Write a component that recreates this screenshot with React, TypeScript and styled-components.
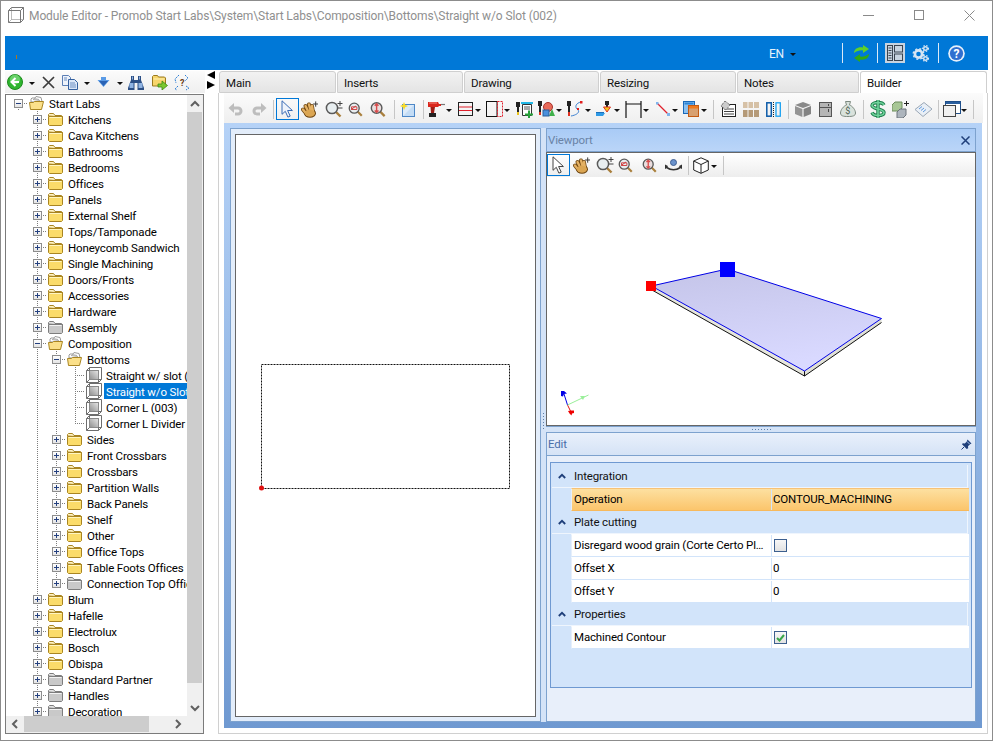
import React from "react";
import styled, { createGlobalStyle } from "styled-components";

const FONT = `Roboto, "Noto Sans", "Liberation Sans", sans-serif`;
const BAR_BLUE = "#0078d7";
const PANEL_LINE = "#7da2ce";
const DOT = "#7d7d7d";

const GlobalStyle = createGlobalStyle`
  html, body { margin: 0; padding: 0; background: #fff; }
  body { font-family: ${FONT}; font-size: 11.5px; letter-spacing: -0.15px; color: #000; }
  svg { display: block; }
`;

/* ---------- icons ---------- */

const Cube = ({ size = 16, color = "#777" }: { size?: number; color?: string }) => (
  <svg width={size} height={size} viewBox="0 0 16 16" fill="none" stroke={color}>
    <path d="M.5 3.5 3.5.5h12v12l-3 3H.5z" />
    <path d="M.5 3.5h12v12M12.5 3.5l3-3" />
    <path d="M3.5.5v12h12M3.5 12.5l-3 3" strokeOpacity=".5" />
  </svg>
);

const FolderIcon = ({ gray }: { gray?: boolean }) => (
  <svg width="15" height="14" viewBox="0 0 15 14">
    <path d="M.5 4V2.500l1-1h4l1.500 2h6.500l1 1V5z" fill={gray ? "#e4e4e4" : "#fff3c4"} stroke={gray ? "#7d7d7d" : "#a98522"} />
    <path d="M.5 4.500h14v8l-1 1h-12l-1-1z" fill={gray ? "#c9c9c9" : "#fbdc6a"} stroke={gray ? "#7d7d7d" : "#a98522"} />
    <path d="M1.500 5.500h12" stroke={gray ? "#f2f2f2" : "#fff5c0"} />
  </svg>
);

const OpenFolderIcon = () => (
  <svg width="15" height="14" viewBox="0 0 15 14">
    <path d="M2 6V3l1-1h3l1-1.500 5 1 1 4z" fill="#fff" stroke="#9a9a9a" />
    <path d="M4 3.500l7 1M5 2.500l5 1" stroke="#a9a9a9" />
    <path d="M.5 6.500h4l1-1h9l-2 8h-11z" fill="#fbe08a" stroke="#a98522" />
  </svg>
);

const LeafIcon = () => (
  <svg width="16" height="16" viewBox="0 0 16 16" fill="none" stroke="#6e6e6e">
    <defs>
      <linearGradient id="leafFill" x1="0" y1="1" x2="1" y2="0">
        <stop offset="0" stopColor="#8e8e8e" />
        <stop offset="1" stopColor="#e8e8e8" />
      </linearGradient>
    </defs>
    <path d="M.5 3.500 3.500.5h12v12l-3 3H.5z" fill="#fff" />
    <rect x="3.500" y="3.500" width="9" height="9" fill="url(#leafFill)" stroke="#8a8a8a" />
    <path d="M.5 3.500h3M3.500.5v3M12.500 12.500h3M12.500 12.500v3M.5 15.500l3-3" />
  </svg>
);

const Back = () => (
  <svg width="16" height="16" viewBox="0 0 16 16">
    <circle cx="8" cy="8" r="7.500" fill="#2fb52f" stroke="#1c8a1c" />
    <circle cx="8" cy="5.500" r="5" fill="#8fe58f" opacity=".6" />
    <path d="M8.500 4 4.500 8l4 4M5 8h7" fill="none" stroke="#fff" strokeWidth="2" />
  </svg>
);

const Cross = () => (
  <svg width="13" height="13" viewBox="0 0 13 13">
    <path d="M1 1l11 11M12 1 1 12" stroke="#3c3c3c" strokeWidth="1.700" />
  </svg>
);

const Copy = () => (
  <svg width="16" height="15" viewBox="0 0 16 15">
    <path d="M.5.5h6l2 2v8h-8z" fill="#eef3fb" stroke="#5c7fb5" />
    <path d="M6.500 4.500h6l3 3v7h-9z" fill="#dbe7f8" stroke="#34609f" />
    <path d="M8 8h5M8 10h6M8 12h6M2 3h3M2 5h3" stroke="#6c8fc2" />
  </svg>
);

const DownArrow = () => (
  <svg width="13" height="11" viewBox="0 0 13 11">
    <path d="M.5 3h3.500V0h5v3h3.500l-6 7z" fill="#5a9be6" />
    <path d="M2 4h9L6.500 9z" fill="#2a63b5" />
  </svg>
);

const Binoculars = () => (
  <svg width="16" height="15" viewBox="0 0 16 15">
    <path d="M3 1h3v4h4V1h3v4l3 8v2H9.500V8h-3v7H0v-2l3-8z" fill="#2c4f85" />
    <path d="M1.500 8h4v5h-4zM10.500 8h4v5h-4z" fill="#8fb3e2" />
    <path d="M4 1.500h1v3H4zM11 1.500h1v3h-1z" fill="#8fb0dc" />
  </svg>
);

const FolderGo = () => (
  <svg width="16" height="16" viewBox="0 0 16 16">
    <path d="M.5 2.500l1-1h4l1 1.500h6l1 1v8h-13z" fill="#f7d56b" stroke="#9a7a1e" />
    <path d="M1.500 5h11" stroke="#fff2b5" />
    <path d="M6 10h4V7l5.500 4.500L10 16v-3H6z" fill="#7cc72f" stroke="#3d8a12" strokeWidth=".8" />
  </svg>
);

const BlueDashed = () => (
  <svg width="16" height="17" viewBox="0 0 16 17" fill="none">
    <path d="M5 1 1 5l1 4M11 1l3 3-3 3M4 12l-3 3 2 1M12 12l3 2-3 2" stroke="#2d7fd6" strokeDasharray="2 1" />
    <text x="6" y="12" fontSize="9" fontWeight="700" fill="#6b3d14" fontFamily={FONT}>?</text>
  </svg>
);

const Undo = ({ flip }: { flip?: boolean }) => (
  <svg width="16" height="14" viewBox="0 0 16 14" style={flip ? { transform: "scaleX(-1)" } : undefined}>
    <path d="M3 6h7a3 3 0 0 1 0 6H7" fill="none" stroke="#bdbdbd" strokeWidth="3" />
    <path d="M6 1v10L.5 6z" fill="#bdbdbd" />
  </svg>
);

const Cursor = ({ color = "#3b6cb5", fill = "#eef3fb" }: { color?: string; fill?: string }) => (
  <svg width="13" height="18" viewBox="0 0 13 18">
    <path d="M1 .8v13.500l3.300-3 2.600 5.800 2.300-1-2.600-5.600h4.800z" fill={fill} stroke={color} />
  </svg>
);

const FINGERS = "M2 8.500 6 13.500M4.500 5 8 12M8 3.500l2 7.500M11 5l1 6";

const Hand = () => (
  <svg width="17" height="17" viewBox="0 0 17 17" fill="none" strokeLinecap="round">
    <path d="M12.500 3h4.500M14.700.8v4.500" stroke="#3a3a3a" />
    <g stroke="#6d4510" strokeWidth="3.900">
      <path d={FINGERS} />
    </g>
    <ellipse cx="9" cy="12.300" rx="6" ry="4.500" fill="#6d4510" />
    <g stroke="#e4b164" strokeWidth="2.400">
      <path d={FINGERS} />
    </g>
    <ellipse cx="9" cy="12.300" rx="5" ry="3.500" fill="#dba653" />
  </svg>
);

type GlassKind = "plus" | "rect" | "fit";

const Glass = ({ kind }: { kind: GlassKind }) => (
  <svg width="18" height="17" viewBox="0 0 18 17" fill="none">
    <path d="M10.500 10.500l5 5" stroke="#a97f3c" strokeWidth="2.400" />
    <circle cx="7" cy="7" r="5.600" fill={kind === "fit" ? "#eadede" : "#e8eef0"} stroke="#5a5a5a" strokeWidth="1.500" />
    {kind === "plus" && <path d="M12.500 2.500h5M15 0v5M12.500 7h5" stroke="#444" />}
    {kind === "rect" && <path d="M3.500 8.500 9 4.500M4 5.500h6v3H4z" stroke="#cc3333" />}
    {kind === "fit" && <path d="M7 2.500v9M5 4.500l2-2 2 2M5 9.500l2 2 2-2" stroke="#d84c4c" strokeWidth="1.500" />}
  </svg>
);

const NewSheet = () => (
  <svg width="15" height="15" viewBox="0 0 15 15">
    <rect x="2.500" y="2.500" width="12" height="12" fill="#dcebfa" stroke="#4d87c7" />
    <path d="M3 14l11-11v11z" fill="#c3dcf5" />
    <path d="M4 0l1.200 2.800L8 4 5.200 5.200 4 8 2.800 5.200 0 4l2.800-1.200z" fill="#f8dc2c" />
  </svg>
);

const Drill = () => (
  <svg width="17" height="17" viewBox="0 0 17 17">
    <path d="M0 1h10l1 2h2v2h-2l-1 1H0z" fill="#d9261c" />
    <path d="M13 3.500h4" stroke="#777" strokeWidth="1.200" />
    <path d="M2.500 6h4.500l-1 6H3z" fill="#9d1d15" />
    <path d="M1 12h7v4H1z" fill="#222" />
    <path d="M1 2h8" stroke="#f58b80" />
  </svg>
);

const RectBand = () => (
  <svg width="15" height="14" viewBox="0 0 15 14" fill="none">
    <rect x=".5" y=".5" width="14" height="13" stroke="#222" />
    <path d="M1 5h13M1 8.500h13" stroke="#e0202c" />
  </svg>
);

const SidePanel = () => (
  <svg width="17" height="16" viewBox="0 0 17 16" fill="none">
    <rect x=".5" y=".5" width="10.500" height="15" stroke="#111" />
    <rect x="11.500" y=".5" width="5" height="15" stroke="#e0202c" strokeDasharray="2 1" />
  </svg>
);

const MachineAdd = () => (
  <svg width="17" height="17" viewBox="0 0 17 17">
    <path d="M0 1h4v5H3v5H1V6H0z" fill="#222" />
    <path d="M1 11h2v3H1z" fill="#e8c21c" />
    <path d="M5 1h12v2H5z" fill="#22b8e6" />
    <path d="M6.500 3.500h9v11h-9z" fill="#fff" stroke="#333" />
    <path d="M8 6h6M8 8h6" stroke="#555" />
    <path d="M12 9.500h2v3h3v2h-3v2.500h-2v-2.500h-3v-2h3z" fill="#26a33a" />
  </svg>
);

const MachineShapes = () => (
  <svg width="17" height="16" viewBox="0 0 17 16">
    <path d="M0 0h4v5H3v6H1V5H0z" fill="#222" />
    <path d="M1 11h2v3H1z" fill="#e03020" />
    <circle cx="10" cy="6" r="4.500" fill="#e86a5a" stroke="#a8322a" />
    <path d="M11 15l3-7 3 7z" fill="#3fb04a" />
    <rect x="5" y="9" width="6" height="6" fill="#4a90dc" stroke="#285f9e" />
  </svg>
);

const MachineCurve = () => (
  <svg width="16" height="17" viewBox="0 0 16 17" fill="none">
    <path d="M0 0h4v5H3v6H1V5H0z" fill="#222" />
    <path d="M1 11h2v4H1z" fill="#e03020" />
    <path d="M14 1C9 2 7 6 11 9c2 2-1 5-7 6" stroke="#3a7fd0" />
    <rect x="13" y="0" width="2.500" height="2.500" fill="#e02020" />
    <rect x="10" y="7" width="2" height="2" fill="#e02020" />
  </svg>
);

const MachineSheet = () => (
  <svg width="17" height="16" viewBox="0 0 17 16">
    <path d="M9 0h4v4h-1v2h-2V4H9z" fill="#222" />
    <path d="M7.500 6h7L11 11z" fill="#f0c81e" stroke="#e03020" />
    <path d="M0 12h9l-2 3H0z" fill="#2e9ae6" />
    <path d="M0 11.500h8" stroke="#1b6fbb" />
  </svg>
);

const Dimension = () => (
  <svg width="17" height="17" viewBox="0 0 17 17">
    <path d="M1 0v17M16 0v17M1 3h15" stroke="#111" strokeWidth="1.200" fill="none" />
  </svg>
);

const Diagonal = () => (
  <svg width="14" height="14" viewBox="0 0 14 14">
    <path d="M1 1l12 12" stroke="#e0202c" strokeWidth="1.300" />
    <path d="M0 0h2.500v2.500H0zM11 11h3v3h-3z" fill="#7fb4ec" />
  </svg>
);

const Stacked = () => (
  <svg width="16" height="16" viewBox="0 0 16 16">
    <rect x=".5" y=".5" width="11" height="12" fill="#8cc0ee" stroke="#1a68b8" />
    <rect x="1.500" y="1.500" width="9" height="2" fill="#2b83d6" />
    <rect x="5.500" y="4.500" width="10" height="11" fill="#d8a070" stroke="#c45a12" />
    <rect x="6" y="5" width="9" height="2.500" fill="#f07a1c" />
  </svg>
);

const Blueprint = () => (
  <svg width="17" height="16" viewBox="0 0 17 16">
    <rect x="3.500" y="3.500" width="13" height="12" fill="#fff" stroke="#222" />
    <path d="M5 8h10M5 10.500h10M5 13h10" stroke="#444" />
    <path d="M6 0l5 4-4 5-5-4z" fill="#ccc" stroke="#777" strokeDasharray="2 1" />
  </svg>
);

const Tiles = () => (
  <svg width="16" height="15" viewBox="0 0 16 15">
    <path d="M0 0h4.500v6H0zM5.500 0H10v6H5.500zM11 0h5v6h-5z" fill="#d6c1a6" />
    <path d="M0 8h4.500v7H0zM5.500 8H10v7H5.500zM11 8h5v7h-5z" fill="#b59a78" />
  </svg>
);

const Columns = () => (
  <svg width="15" height="15" viewBox="0 0 15 15" fill="none">
    <rect x=".8" y=".8" width="4.500" height="13.400" stroke="#0b5aa8" strokeWidth="1.500" />
    <rect x="10" y=".8" width="4.300" height="13.400" stroke="#19a0f0" strokeWidth="1.300" />
    <path d="M7.500 0v15" stroke="#222" strokeDasharray="1 1" />
  </svg>
);

const GrayBox = () => (
  <svg width="16" height="15" viewBox="0 0 16 15">
    <path d="M0 3l8-3 8 3-8 3z" fill="#8a8a8a" />
    <path d="M0 4v8l7.400 3V7z" fill="#949494" />
    <path d="M16 4v8l-7.400 3V7z" fill="#838383" />
  </svg>
);

const Fridge = () => (
  <svg width="13" height="15" viewBox="0 0 13 15">
    <rect x=".5" y=".5" width="12" height="14" fill="#b5b5b5" stroke="#555" />
    <path d="M1 5.500h11" stroke="#555" />
    <path d="M9.500 2v2M9.500 7v3" stroke="#444" />
  </svg>
);

const MoneyBag = () => (
  <svg width="16" height="16" viewBox="0 0 16 16">
    <path d="M5.500.5h5L9.500 4c3 1 6 5 6 8 0 3-3 3.500-7.500 3.500S.5 15 .5 12c0-3 3-7 6-8z" fill="#d9e2dc" stroke="#7d8a80" />
    <text x="5.300" y="13" fontSize="9" fill="#4c5d52" fontFamily={FONT}>$</text>
  </svg>
);

const DOLLAR = "M14 5c-1-2-3-2.500-6-2.500S2 3.500 2 5.500 5 8 8 9s6 1.500 6 3.500-3 3-6 3-5-.5-6-3M8 0v18";

const Dollar = () => (
  <svg width="16" height="18" viewBox="0 0 16 18" fill="none">
    <path d={DOLLAR} stroke="#1f7d4d" strokeWidth="3.400" />
    <path d={DOLLAR} stroke="#6fd39b" strokeWidth="1.600" />
  </svg>
);

const Blocks = () => (
  <svg width="17" height="17" viewBox="0 0 17 17">
    <path d="M0 4l3-3h7v6l-3 3H0z" fill="#a8c796" stroke="#6d8c5c" />
    <path d="M5 11l3-3h6v6l-3 3H5z" fill="#adb5bd" stroke="#6c747c" />
    <path d="M12 2h2V0h1v2h2v1h-2v2h-1V3h-2z" fill="#222" />
  </svg>
);

const Tag = () => (
  <svg width="17" height="15" viewBox="0 0 17 15">
    <path d="M0 7.500 9 .5l8 6.500-9 7.500z" fill="#e9eff6" stroke="#9aa7b5" />
    <path d="M4 7l3-2.500M6 8.500l3-2.500M8 10l3-2.500" stroke="#5f9ae0" />
  </svg>
);

const Windows = () => (
  <svg width="18" height="16" viewBox="0 0 18 16">
    <rect x="2.500" y=".5" width="15" height="12" fill="#fff" stroke="#1f4f8a" />
    <rect x="3" y="1" width="14" height="2" fill="#2a5f9e" />
    <rect x=".5" y="4.500" width="12" height="11" fill="#f0f0f0" stroke="#444" />
  </svg>
);

const Orbit = () => (
  <svg width="17" height="13" viewBox="0 0 17 13">
    <circle cx="8.500" cy="3.500" r="3" fill="#6a92cc" stroke="#3f5f92" />
    <path d="M0 5.500 3 7l-.5 1c4 2.500 8 2.500 12 0L14 7l3-1.500V10l-1.500-.8c-4 3-10 3-14 0L0 10z" fill="#333" />
  </svg>
);

const CubeOutline = () => (
  <svg width="16" height="17" viewBox="0 0 16 17" fill="#fff" stroke="#222">
    <path d="M8 .8 15.300 4v9L8 16.300.7 13V4z" />
    <path d="M.7 4 8 7.500 15.300 4M8 7.500v8.800" />
  </svg>
);

const Sync = () => (
  <svg width="19" height="17" viewBox="0 0 19 17">
    <path d="M2 8C2 4 6 1.500 11 2.500V0l6 4-6 4V5.500C8 5 5 6 2 8z" fill="#5fd02a" />
    <path d="M17 9c0 4-4 6.500-9 5.500V17l-6-4 6-4v2.500c3 .5 6-.5 9-2.500z" fill="#32a814" />
  </svg>
);

const LayoutGlyph = () => (
  <svg width="16" height="16" viewBox="0 0 16 16" fill="none" stroke="#3a4450">
    <rect x=".5" y=".5" width="5" height="15" />
    <rect x="7.500" y=".5" width="8" height="6.500" />
    <rect x="7.500" y="9" width="8" height="6.500" />
    <path d="M1.500 3h3M1.500 5.500h3M1.500 8h3M1.500 10.500h3M1.500 13h3" />
  </svg>
);

const Gears = () => (
  <svg width="17" height="17" viewBox="0 0 17 17" fill="none">
    <circle cx="6.500" cy="9" r="3.600" stroke="#d7e5f3" strokeWidth="2.600" />
    <circle cx="6.500" cy="9" r="5.300" stroke="#d7e5f3" strokeWidth="1.400" strokeDasharray="2 2.200" />
    <circle cx="13.500" cy="3.500" r="1.800" stroke="#d7e5f3" strokeWidth="1.400" />
    <circle cx="13.500" cy="3.500" r="3" stroke="#d7e5f3" strokeWidth="1.100" strokeDasharray="1.400 1.500" />
    <circle cx="13.500" cy="13.500" r="1.800" stroke="#d7e5f3" strokeWidth="1.400" />
    <circle cx="13.500" cy="13.500" r="3" stroke="#d7e5f3" strokeWidth="1.100" strokeDasharray="1.400 1.500" />
  </svg>
);

const Help = () => (
  <svg width="17" height="17" viewBox="0 0 17 17">
    <circle cx="8.500" cy="8.500" r="8.300" fill="#e6f0fb" />
    <circle cx="8.500" cy="8.500" r="6.600" fill="#2f6fd0" />
    <text x="8.500" y="12.800" textAnchor="middle" fontSize="12" fontWeight="700" fill="#fff" fontFamily={FONT}>?</text>
  </svg>
);

const Pin = () => (
  <svg width="11" height="11" viewBox="0 0 11 11">
    <path d="M6.500.5l4 4-1.500.7-2 2 .2 2L5.700 10 1 5.300l.8-1 2 .2 2-2z" fill="#1f3f7a" />
    <path d="M3 8l-2.500 2.500" stroke="#1f3f7a" />
    <path d="M6 2.500l2.500 2.500" stroke="#a9c4ea" />
  </svg>
);

const Chevron = ({ dir }: { dir: "up" | "down" | "left" | "right" }) => {
  const d = {
    up: "M1 7l4-4 4 4",
    down: "M1 3l4 4 4-4",
    left: "M7 1 3 5l4 4",
    right: "M3 1l4 4-4 4",
  }[dir];
  return (
    <svg width="10" height="10" viewBox="0 0 10 10">
      <path d={d} fill="none" stroke="#606060" strokeWidth="2" />
    </svg>
  );
};

const CategoryChevron = () => (
  <svg width="8" height="6" viewBox="0 0 8 6">
    <path d="M.8 5 4 1.800 7.200 5" fill="none" stroke="#1f3f7a" strokeWidth="1.800" />
  </svg>
);

/* ---------- window chrome ---------- */

const Window = styled.div`
  width: 993px;
  height: 741px;
  box-sizing: border-box;
  border: 1px solid #8c8c8c;
  background: #fff;
  display: flex;
  flex-direction: column;
  overflow: hidden;
`;

const TitleBar = styled.header`
  height: 35px;
  flex-shrink: 0;
  padding-left: 7px;
  display: flex;
  align-items: flex-start;
  gap: 5px;
  color: #8f8f8f;
  font-size: 12px;
  letter-spacing: -0.1px;
`;

const TitleText = styled.span`
  flex: 1;
  line-height: 30px;
  white-space: nowrap;
`;

const TitleIcon = styled.span`
  padding-top: 6px;
`;

const WinButton = styled.span`
  width: 45.5px;
  height: 28px;
  display: flex;
  align-items: center;
  justify-content: center;
`;

const TopBar = styled.div`
  height: 34px;
  flex-shrink: 0;
  margin: 0 4px;
  padding: 0 21px 0 11px;
  background: ${BAR_BLUE};
  display: flex;
  align-items: center;
  color: #e8f2fb;
`;

const Speck = styled.span`
  width: 1px;
  height: 4px;
  margin-top: 8px;
  background: #b0751f;
`;

const Lang = styled.span`
  margin-left: auto;
  font-size: 12px;
  padding-top: 1px;
`;

const BarCaret = styled.span`
  margin: 2px 46px 0 6px;
  border-top: 3px solid #111;
  border-left: 3px solid transparent;
  border-right: 3px solid transparent;
`;

const BarSep = styled.span`
  width: 1px;
  height: 20px;
  background: #dbe9f7;
`;

const BarIcon = styled.span<{ $ml: number; $mr: number; $on?: boolean }>`
  margin: 0 ${(p) => p.$mr}px 0 ${(p) => p.$ml}px;
  padding: 2px;
  display: flex;
  background: ${(p) => (p.$on ? "#c8d4e0" : "transparent")};
`;

const Main = styled.div`
  flex: 1;
  min-height: 0;
  margin: 0 4px 6px;
  display: flex;
`;

/* ---------- left pane ---------- */

const LeftPane = styled.aside`
  width: 200px;
  flex-shrink: 0;
  display: flex;
  flex-direction: column;
`;

const Toolbar = styled.div<{ $h: number }>`
  height: ${(p) => p.$h}px;
  flex-shrink: 0;
  display: flex;
  align-items: center;
  background: linear-gradient(#fbfbfb, #efefef);
`;

const LeftToolbar = styled(Toolbar)`
  margin-top: 1px;
  margin-bottom: 1px;
`;

const Slot = styled.span<{ $ml: number; $w: number }>`
  width: ${(p) => p.$w}px;
  margin-left: ${(p) => p.$ml}px;
  flex-shrink: 0;
  display: flex;
  justify-content: center;
`;

const Caret = styled.span<{ $ml: number }>`
  margin-left: ${(p) => p.$ml}px;
  margin-top: 3px;
  flex-shrink: 0;
  border-top: 3px solid #111;
  border-left: 3px solid transparent;
  border-right: 3px solid transparent;
`;

const Sep = styled.span<{ $ml: number }>`
  width: 1px;
  height: 19px;
  margin-left: ${(p) => p.$ml}px;
  flex-shrink: 0;
  background: #c6c6c6;
`;

const ActiveTool = styled.span<{ $ml: number }>`
  width: 23px;
  height: 22px;
  margin-left: ${(p) => p.$ml}px;
  box-sizing: border-box;
  flex-shrink: 0;
  border: 1px solid ${BAR_BLUE};
  display: flex;
  align-items: center;
  justify-content: center;
`;

const TreeBox = styled.div`
  width: 199px;
  flex: 1;
  min-height: 0;
  box-sizing: border-box;
  border: 1px solid #7b7b7b;
  padding-bottom: 1px;
  display: grid;
  grid-template-columns: 181px 15px;
  grid-template-rows: 1fr 16px;
  background: #f0f0f0;
`;

const TreeArea = styled.div`
  padding-left: 3px;
  background: #fff;
  overflow: hidden;
  min-height: 0;
`;

const Row = styled.div`
  height: 16px;
  display: flex;
  width: max-content;
`;

const vDots = `repeating-linear-gradient(${DOT} 0 1px, transparent 1px 2px)`;
const hDots = `repeating-linear-gradient(90deg, ${DOT} 0 1px, transparent 1px 2px)`;

const Indent = styled.span<{ $line?: boolean }>`
  width: 19px;
  flex-shrink: 0;
  background: ${(p) => (p.$line ? `${vDots} 9px 0 / 1px 16px no-repeat` : "none")};
`;

type Stem = "full" | "upper" | "lower";

const stemPlace: Record<Stem, string> = {
  full: "9px 0 / 1px 16px",
  upper: "9px 0 / 1px 8px",
  lower: "9px 8px / 1px 8px",
};

const LineCell = styled.span<{ $stem: Stem }>`
  width: 19px;
  flex-shrink: 0;
  box-sizing: border-box;
  padding-right: 1px;
  display: flex;
  align-items: center;
  justify-content: center;
  background:
    ${hDots} 9px 8px / 10px 1px no-repeat,
    ${vDots} ${(p) => stemPlace[p.$stem]} no-repeat;
`;

const Expander = styled.span`
  width: 9px;
  height: 9px;
  box-sizing: border-box;
  border: 1px solid #8d8d8d;
  background: linear-gradient(#fff, #e4e4e4);
  display: flex;
  align-items: center;
  justify-content: center;
  position: relative;
`;

const Bar = styled.span<{ $v?: boolean }>`
  position: absolute;
  background: #24407f;
  width: ${(p) => (p.$v ? 1 : 5)}px;
  height: ${(p) => (p.$v ? 5 : 1)}px;
`;

const IconSlot = styled.span`
  width: 19px;
  flex-shrink: 0;
  padding-left: 1px;
  box-sizing: border-box;
  display: flex;
  align-items: center;
`;

const NodeLabel = styled.span<{ $selected?: boolean }>`
  height: 16px;
  padding: 0 2px;
  line-height: 18px;
  white-space: nowrap;
  overflow: hidden;
  background: ${(p) => (p.$selected ? BAR_BLUE : "transparent")};
  color: ${(p) => (p.$selected ? "#fff" : "#000")};
`;

const VScroll = styled.div`
  display: flex;
  flex-direction: column;
  background: #f0f0f0;
`;

const ScrollEnd = styled.span<{ $end?: boolean }>`
  height: 17px;
  flex-shrink: 0;
  margin-top: ${(p) => (p.$end ? "auto" : "0")};
  display: flex;
  align-items: center;
  justify-content: center;
`;

const VThumb = styled.span`
  height: 571px;
  flex-shrink: 0;
  background: #cdcdcd;
`;

const HScroll = styled.div`
  grid-column: 1 / -1;
  display: flex;
  background: #f0f0f0;
`;

const HEnd = styled.span<{ $w: number }>`
  width: ${(p) => p.$w}px;
  flex-shrink: 0;
  display: flex;
  align-items: center;
  justify-content: center;
`;

const HThumb = styled.span`
  width: 125px;
  flex-shrink: 0;
  background: #cdcdcd;
`;

/* ---------- splitter between tree and tabs ---------- */

const PaneSplitter = styled.div`
  width: 13px;
  flex-shrink: 0;
  padding: 1px 0 0 2px;
  box-sizing: border-box;
  display: flex;
  flex-direction: column;
  gap: 2px;
`;

const Tri = styled.span<{ $left?: boolean }>`
  width: 0;
  height: 0;
  border-top: 4px solid transparent;
  border-bottom: 4px solid transparent;
  ${(p) => (p.$left ? "border-right: 8px solid #000;" : "border-left: 8px solid #000;")}
`;

/* ---------- right pane ---------- */

const RightPane = styled.section`
  flex: 1;
  min-width: 0;
  display: flex;
  flex-direction: column;
`;

const TabRow = styled.nav`
  height: 22px;
  flex-shrink: 0;
  margin: 1px 0 0 1px;
  display: flex;
  gap: 1px;
`;

const Tab = styled.span<{ $w: number; $active?: boolean }>`
  width: ${(p) => p.$w}px;
  box-sizing: border-box;
  padding: 2px 0 0 6px;
  border: 1px solid #cfcfcf;
  border-bottom: ${(p) => (p.$active ? "none" : "1px solid #cfcfcf")};
  border-radius: 3px 3px 0 0;
  background: ${(p) => (p.$active ? "#fff" : "linear-gradient(#f2f2f2, #e4e4e4)")};
  line-height: 18px;
  color: #111;
`;

const TabBody = styled.div`
  flex: 1;
  min-height: 0;
  box-sizing: border-box;
  border: 1px solid #d0d0d0;
  border-top: none;
  padding: 0 5px 5px;
  display: flex;
  flex-direction: column;
`;

const MainToolbar = styled(Toolbar)`
  margin-right: -1px;
  padding-top: 2px;
  box-sizing: border-box;
`;

const DocFrame = styled.div`
  flex: 1;
  min-height: 0;
  padding: 5px 6px 6px;
  display: flex;
  background: linear-gradient(#b5d2f7, #6f99d1);
`;

const CanvasPanel = styled.div`
  width: 311px;
  flex-shrink: 0;
  box-sizing: border-box;
  border: 1px solid ${PANEL_LINE};
  padding: 5px 4px 4px;
  background: #e3edfa;
  display: flex;
`;

const CanvasSheet = styled.div`
  flex: 1;
  border: 1px solid #666;
  background: #fff;
`;

const Splitter = styled.div`
  width: 5px;
  flex-shrink: 0;
  background: #d4e3f7;
  display: flex;
  align-items: center;
  justify-content: center;
  padding-bottom: 9px;
  box-sizing: border-box;
`;

const GripV = styled.span`
  width: 1px;
  height: 16px;
  background-image: linear-gradient(#5f7fa8 50%, transparent 50%);
  background-size: 1px 3px;
`;

const Side = styled.div`
  flex: 1;
  min-width: 0;
  display: flex;
  flex-direction: column;
`;

const ViewportTitle = styled.div`
  height: 24px;
  box-sizing: border-box;
  flex-shrink: 0;
  border: 1px solid ${PANEL_LINE};
  padding: 0 5px 0 1px;
  display: flex;
  align-items: center;
  justify-content: space-between;
  background: linear-gradient(#a9cbf6, #bad5f8);
  color: #6a83a6;
`;

const ViewportBody = styled.div`
  height: 274px;
  flex-shrink: 0;
  box-sizing: border-box;
  border: 1px solid #666;
  border-top: none;
  background: #fff;
  display: flex;
  flex-direction: column;
`;

const ViewToolbar = styled(Toolbar)`
  background: linear-gradient(#fff, #ededed);
  border-top: 1px solid #666;
  box-sizing: content-box;
`;

const GripH = styled.div`
  height: 5px;
  flex-shrink: 0;
  border-top: 1px solid ${PANEL_LINE};
  background: #d4e3f7;
  display: flex;
  align-items: center;
  justify-content: center;
`;

const GripDots = styled.span`
  width: 19px;
  height: 1px;
  background-image: linear-gradient(90deg, #5f7fa8 50%, transparent 50%);
  background-size: 3px 1px;
`;

const EditPanel = styled.div`
  flex: 1;
  min-height: 0;
  border: 1px solid ${PANEL_LINE};
  background: #e8effa;
  display: flex;
  flex-direction: column;
`;

const EditTitle = styled.div`
  height: 22px;
  flex-shrink: 0;
  padding: 0 3px 0 1px;
  border-bottom: 1px solid ${PANEL_LINE};
  display: flex;
  align-items: center;
  justify-content: space-between;
  background: linear-gradient(#e9f0fb, #d5e3f6);
  color: #4a6ea9;
`;

const GridBox = styled.div`
  height: 226px;
  box-sizing: border-box;
  margin: 6px 3px 0;
  border: 1px solid #6f99d1;
  padding: 2px 2px 0 1px;
  background: #d2e4fa;
`;

const CategoryRow = styled.div`
  height: 23px;
  box-sizing: border-box;
  margin-right: 1px;
  border-bottom: 1px solid #eff5fd;
  border-right: 1px solid #eff5fd;
  display: flex;
  align-items: center;
  color: #111;
`;

const Gutter = styled.span`
  width: 19px;
  flex-shrink: 0;
  display: flex;
  justify-content: center;
`;

const CatLabel = styled.span`
  padding-left: 3px;
`;

const PropRow = styled.div<{ $selected?: boolean }>`
  height: 23px;
  display: flex;
  margin-left: 19px;
  box-sizing: border-box;
  border-bottom: 1px solid ${(p) => (p.$selected ? "#f7b95c" : "#d2e4fa")};
  border-top: 1px solid ${(p) => (p.$selected ? "#f7c276" : "transparent")};
  border-left: 1px solid #e6effb;
  background: ${(p) => (p.$selected ? "linear-gradient(#fde0a0, #fbc56c)" : "#fff")};
  line-height: 21px;
`;

const PropName = styled.span`
  width: 199px;
  flex-shrink: 0;
  box-sizing: border-box;
  padding: 0 3px 0 2px;
  white-space: nowrap;
  overflow: hidden;
  text-overflow: ellipsis;
`;

const PropValue = styled.span`
  flex: 1;
  padding-left: 1px;
  border-left: 1px solid #d2e4fa;
  display: flex;
  align-items: center;
`;

const Check = styled.span`
  width: 13px;
  height: 13px;
  margin-left: 1px;
  box-sizing: border-box;
  border: 1px solid #3c5f8f;
  background: linear-gradient(#f7f7f7, #e2e2e2);
  display: flex;
  align-items: center;
  justify-content: center;
`;

/* ---------- data ---------- */

type NodeKind = "open" | "yellow" | "gray" | "leaf";
type Node = { level: number; label: string; kind: NodeKind; selected?: boolean; last?: boolean };

const f = (level: number, label: string, kind: NodeKind = "yellow", last?: boolean): Node => ({ level, label, kind, last });

const TREE: Node[] = [
  f(0, "Start Labs", "open"),
  f(1, "Kitchens"),
  f(1, "Cava Kitchens"),
  f(1, "Bathrooms"),
  f(1, "Bedrooms"),
  f(1, "Offices"),
  f(1, "Panels"),
  f(1, "External Shelf"),
  f(1, "Tops/Tamponade"),
  f(1, "Honeycomb Sandwich"),
  f(1, "Single Machining"),
  f(1, "Doors/Fronts"),
  f(1, "Accessories"),
  f(1, "Hardware"),
  f(1, "Assembly", "gray"),
  f(1, "Composition", "open"),
  f(2, "Bottoms", "open"),
  f(3, "Straight w/ slot (001)", "leaf"),
  { level: 3, label: "Straight w/o Slot (002)", kind: "leaf", selected: true },
  f(3, "Corner L (003)", "leaf"),
  f(3, "Corner L Divider (004)", "leaf", true),
  f(2, "Sides"),
  f(2, "Front Crossbars"),
  f(2, "Crossbars"),
  f(2, "Partition Walls"),
  f(2, "Back Panels"),
  f(2, "Shelf"),
  f(2, "Other"),
  f(2, "Office Tops"),
  f(2, "Table Foots Offices"),
  f(2, "Connection Top Offices", "gray", true),
  f(1, "Blum"),
  f(1, "Hafelle"),
  f(1, "Electrolux"),
  f(1, "Bosch"),
  f(1, "Obispa"),
  f(1, "Standard Partner", "gray"),
  f(1, "Handles", "gray"),
  f(1, "Decoration", "gray"),
];

type Tool =
  | { t: "i"; ml: number; w: number; el: React.ReactNode }
  | { t: "c"; ml: number }
  | { t: "s"; ml: number }
  | { t: "a"; ml: number; el: React.ReactNode };

const i = (ml: number, w: number, el: React.ReactNode): Tool => ({ t: "i", ml, w, el });
const c = (ml: number): Tool => ({ t: "c", ml });
const s = (ml: number): Tool => ({ t: "s", ml });

const TREE_TOOLS: Tool[] = [
  i(2, 16, <Back />), c(6), i(7, 13, <Cross />), i(7, 16, <Copy />), c(6),
  i(7, 13, <DownArrow />), c(7), i(5, 16, <Binoculars />), i(8, 16, <FolderGo />), i(6, 16, <BlueDashed />),
];

const MAIN_TOOLS: Tool[] = [
  i(4, 16, <Undo />), i(7, 16, <Undo flip />), s(6),
  { t: "a", ml: 2, el: <Cursor /> },
  i(2, 17, <Hand />), i(7, 18, <Glass kind="plus" />), i(5, 16, <Glass kind="rect" />), i(6, 17, <Glass kind="fit" />), s(7),
  i(5, 15, <NewSheet />), s(8), i(4, 17, <Drill />), c(1), i(6, 15, <RectBand />), c(2),
  i(5, 17, <SidePanel />), c(1), i(6, 17, <MachineAdd />), i(5, 17, <MachineShapes />), c(1),
  i(5, 16, <MachineCurve />), c(2), i(5, 17, <MachineSheet />), c(1), i(5, 17, <Dimension />), c(1),
  i(7, 14, <Diagonal />), c(2), i(5, 16, <Stacked />), c(2), s(6), i(5, 17, <Blueprint />),
  i(7, 16, <Tiles />), i(7, 15, <Columns />), s(7), i(6, 16, <GrayBox />), i(8, 13, <Fridge />),
  i(8, 16, <MoneyBag />), s(7), i(5, 17, <Dollar />), i(6, 17, <Blocks />), i(6, 17, <Tag />), s(6),
  i(4, 18, <Windows />), c(0), s(6),
];

const VIEW_TOOLS: Tool[] = [
  { t: "a", ml: 0, el: <Cursor color="#444" fill="#fff" /> },
  i(3, 17, <Hand />), i(6, 18, <Glass kind="plus" />), i(4, 16, <Glass kind="rect" />), i(8, 16, <Glass kind="fit" />),
  i(7, 17, <Orbit />), s(6), i(4, 16, <CubeOutline />), c(2), s(6),
];

const renderTools = (tools: Tool[]) =>
  tools.map((tool, n) => {
    if (tool.t === "i") return <Slot key={n} $ml={tool.ml} $w={tool.w}>{tool.el}</Slot>;
    if (tool.t === "c") return <Caret key={n} $ml={tool.ml} />;
    if (tool.t === "s") return <Sep key={n} $ml={tool.ml} />;
    return <ActiveTool key={n} $ml={tool.ml}>{tool.el}</ActiveTool>;
  });

const NodeIcon = ({ kind }: { kind: NodeKind }) => {
  if (kind === "open") return <OpenFolderIcon />;
  if (kind === "leaf") return <LeafIcon />;
  return <FolderIcon gray={kind === "gray"} />;
};

const TreeRow = ({ node }: { node: Node }) => {
  const { level, kind, label, selected, last } = node;
  const open = kind === "open";
  const stem: Stem = level === 0 ? "lower" : last ? "upper" : "full";
  return (
    <Row>
      {level >= 1 && <Indent />}
      {level >= 2 && <Indent $line />}
      {level >= 3 && <Indent $line />}
      <LineCell $stem={stem}>
        {kind !== "leaf" && (
          <Expander>
            <Bar />
            {!open && <Bar $v />}
          </Expander>
        )}
      </LineCell>
      <IconSlot>
        <NodeIcon kind={kind} />
      </IconSlot>
      <NodeLabel $selected={selected}>{label}</NodeLabel>
    </Row>
  );
};

export default function App() {
  return (
    <>
      <GlobalStyle />
      <Window>
        <TitleBar>
          <TitleIcon>
            <Cube />
          </TitleIcon>
          <TitleText>{"Module Editor - Promob Start Labs\\System\\Start Labs\\Composition\\Bottoms\\Straight w/o Slot (002)"}</TitleText>
          <WinButton>
            <svg width="11" height="1"><path d="M0 .5h11" stroke="#8a8a8a" /></svg>
          </WinButton>
          <WinButton>
            <svg width="10" height="10"><rect x=".5" y=".5" width="9" height="9" fill="none" stroke="#8a8a8a" /></svg>
          </WinButton>
          <WinButton>
            <svg width="11" height="11"><path d="M.5.500l10 10M10.500.500l-10 10" stroke="#8a8a8a" /></svg>
          </WinButton>
        </TitleBar>

        <TopBar>
          <Speck />
          <Lang>EN</Lang>
          <BarCaret />
          <BarSep />
          <BarIcon $ml={7} $mr={4}><Sync /></BarIcon>
          <BarSep />
          <BarIcon $ml={7} $mr={5} $on><LayoutGlyph /></BarIcon>
          <BarIcon $ml={0} $mr={7}><Gears /></BarIcon>
          <BarSep />
          <BarIcon $ml={7} $mr={0}><Help /></BarIcon>
        </TopBar>

        <Main>
          <LeftPane>
            <LeftToolbar $h={22}>{renderTools(TREE_TOOLS)}</LeftToolbar>
            <TreeBox>
              <TreeArea>
                {TREE.map((node) => (
                  <TreeRow key={node.label} node={node} />
                ))}
              </TreeArea>
              <VScroll>
                <ScrollEnd><Chevron dir="up" /></ScrollEnd>
                <VThumb />
                <ScrollEnd $end><Chevron dir="down" /></ScrollEnd>
              </VScroll>
              <HScroll>
                <HEnd $w={18}><Chevron dir="left" /></HEnd>
                <HThumb />
                <HEnd $w={58}><Chevron dir="right" /></HEnd>
              </HScroll>
            </TreeBox>
          </LeftPane>

          <PaneSplitter>
            <Tri $left />
            <Tri />
          </PaneSplitter>

          <RightPane>
            <TabRow>
              <Tab $w={117}>Main</Tab>
              <Tab $w={126}>Inserts</Tab>
              <Tab $w={135}>Drawing</Tab>
              <Tab $w={136}>Resizing</Tab>
              <Tab $w={122}>Notes</Tab>
              <Tab $w={127} $active>Builder</Tab>
            </TabRow>
            <TabBody>
              <MainToolbar $h={30}>{renderTools(MAIN_TOOLS)}</MainToolbar>
              <DocFrame>
                <CanvasPanel>
                  <CanvasSheet>
                    <svg width="299" height="582" viewBox="236 135 299 582">
                      <rect x="261.500" y="364.500" width="248" height="124" fill="none" stroke="#111" strokeDasharray="2 1" />
                      <circle cx="261.500" cy="488" r="2.500" fill="#e01010" />
                    </svg>
                  </CanvasSheet>
                </CanvasPanel>
                <Splitter><GripV /></Splitter>
                <Side>
                  <ViewportTitle>
                    Viewport
                    <svg width="9" height="9"><path d="M.5.500l8 8M8.500.500l-8 8" stroke="#1f3f7a" strokeWidth="1.500" /></svg>
                  </ViewportTitle>
                  <ViewportBody>
                    <ViewToolbar $h={24}>{renderTools(VIEW_TOOLS)}</ViewToolbar>
                    <svg width="428" height="248" viewBox="547 177 428 248">
                      <defs>
                        <linearGradient id="plate" x1="0" y1="0" x2="0.3" y2="1">
                          <stop offset="0" stopColor="#c4c4e8" />
                          <stop offset="1" stopColor="#d9d9ff" />
                        </linearGradient>
                      </defs>
                      <path d="M651.500 286 804.500 371v5L652 290z" fill="#e6e6dc" />
                      <path d="M804.500 371 881.500 318.500v4l-77 53.500z" fill="#e0e0d6" />
                      <path d="M652 290 804.500 376 881.500 322.500M804.500 371v5" fill="none" stroke="#111" />
                      <path d="M651.500 286 727 269 881.500 318.500 804.500 371z" fill="url(#plate)" stroke="#0000e6" />
                      <rect x="720" y="262" width="15" height="15" fill="#0000ff" />
                      <rect x="646" y="281" width="10" height="10" fill="#ff0000" />
                      <path d="M567.500 405 564 394" stroke="#0000e6" />
                      <path d="M561 391h3l3 2.500-3 .5-1 2.500-2-.5z" fill="#0000e6" />
                      <path d="M567.500 405 571 412" stroke="#e01010" />
                      <path d="M568 411l3-.5h3v2.500l-2 .5-.5 2-2-2z" fill="#ee0000" />
                      <path d="M567.500 405 588.500 395" stroke="#9aef9a" />
                      <path d="M580 396l5 0-2 4z" fill="#9aef9a" />
                    </svg>
                  </ViewportBody>
                  <GripH><GripDots /></GripH>
                  <EditPanel>
                    <EditTitle>
                      Edit
                      <Pin />
                    </EditTitle>
                    <GridBox>
                      <CategoryRow><Gutter><CategoryChevron /></Gutter><CatLabel>Integration</CatLabel></CategoryRow>
                      <PropRow $selected>
                        <PropName>Operation</PropName>
                        <PropValue>CONTOUR_MACHINING</PropValue>
                      </PropRow>
                      <CategoryRow><Gutter><CategoryChevron /></Gutter><CatLabel>Plate cutting</CatLabel></CategoryRow>
                      <PropRow>
                        <PropName>Disregard wood grain (Corte Certo Plus)</PropName>
                        <PropValue><Check /></PropValue>
                      </PropRow>
                      <PropRow>
                        <PropName>Offset X</PropName>
                        <PropValue>0</PropValue>
                      </PropRow>
                      <PropRow>
                        <PropName>Offset Y</PropName>
                        <PropValue>0</PropValue>
                      </PropRow>
                      <CategoryRow><Gutter><CategoryChevron /></Gutter><CatLabel>Properties</CatLabel></CategoryRow>
                      <PropRow>
                        <PropName>Machined Contour</PropName>
                        <PropValue>
                          <Check>
                            <svg width="9" height="8"><path d="M1 4l2.500 2.500L8 1" fill="none" stroke="#3aa64a" strokeWidth="2" /></svg>
                          </Check>
                        </PropValue>
                      </PropRow>
                    </GridBox>
                  </EditPanel>
                </Side>
              </DocFrame>
            </TabBody>
          </RightPane>
        </Main>
      </Window>
    </>
  );
}
